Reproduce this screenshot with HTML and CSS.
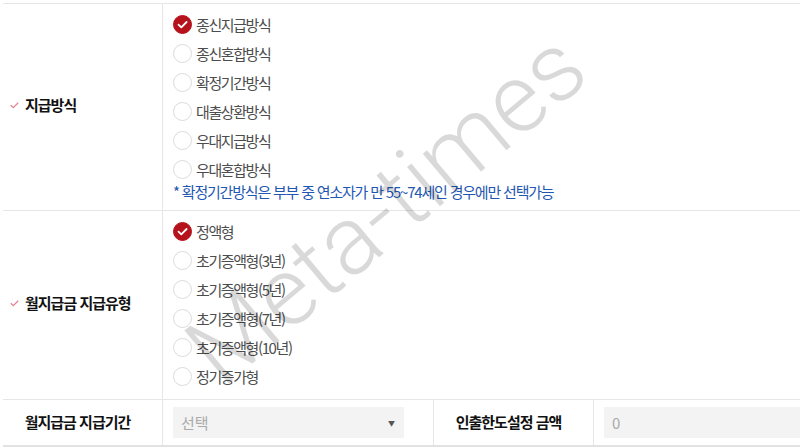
FILE: index.html
```html
<!DOCTYPE html>
<html lang="ko">
<head>
<meta charset="utf-8">
<link rel="stylesheet" href="styles.css">
</head>
<body>
<div class="page">
  <div class="row r1">
    <div class="th"><svg class="tick" width="9" height="7" viewBox="0 0 9 7"><path d="M0.8 3.2 L3.3 5.7 L8.2 0.8" fill="none" stroke="#e38592" stroke-width="1.3"/></svg>지급방식</div>
    <div class="td">
      <ul class="radios">
        <li class="radio on"><span class="dot"><svg width="19" height="19" viewBox="0 0 19 19"><path d="M5.5 9.6 L8.3 12.3 L13.6 7" fill="none" stroke="#fff" stroke-width="1.8" stroke-linecap="round" stroke-linejoin="round"/></svg></span>종신지급방식</li>
        <li class="radio"><span class="dot"></span>종신혼합방식</li>
        <li class="radio"><span class="dot"></span>확정기간방식</li>
        <li class="radio"><span class="dot"></span>대출상환방식</li>
        <li class="radio"><span class="dot"></span>우대지급방식</li>
        <li class="radio"><span class="dot"></span>우대혼합방식</li>
      </ul>
      <p class="note">* 확정기간방식은 부부 중 연소자가 만 55~74세인 경우에만 선택가능</p>
    </div>
  </div>
  <div class="row r2">
    <div class="th"><svg class="tick" width="9" height="7" viewBox="0 0 9 7"><path d="M0.8 3.2 L3.3 5.7 L8.2 0.8" fill="none" stroke="#e38592" stroke-width="1.3"/></svg>월지급금 지급유형</div>
    <div class="td">
      <ul class="radios">
        <li class="radio on"><span class="dot"><svg width="19" height="19" viewBox="0 0 19 19"><path d="M5.5 9.6 L8.3 12.3 L13.6 7" fill="none" stroke="#fff" stroke-width="1.8" stroke-linecap="round" stroke-linejoin="round"/></svg></span>정액형</li>
        <li class="radio"><span class="dot"></span>초기증액형(3년)</li>
        <li class="radio"><span class="dot"></span>초기증액형(5년)</li>
        <li class="radio"><span class="dot"></span>초기증액형(7년)</li>
        <li class="radio"><span class="dot"></span>초기증액형(10년)</li>
        <li class="radio"><span class="dot"></span>정기증가형</li>
      </ul>
    </div>
  </div>
  <div class="row r3">
    <div class="th center">월지급금 지급기간</div>
    <div class="td cell-sel">
      <div class="select"><span>선택</span><span class="arrow">▼</span></div>
    </div>
    <div class="th center th2">인출한도설정 금액</div>
    <div class="td cell-in">
      <div class="input">0</div>
    </div>
  </div>
  <div class="wm">Meta-times</div>
</div>
</body>
</html>
```
FILE: styles.css
```css
* { box-sizing: border-box; }
html, body { margin: 0; padding: 0; background: #fff; }
body {
  width: 800px;
  height: 448px;
  overflow: hidden;
  font-family: "Noto Sans CJK KR", "Noto Sans", sans-serif;
  font-size: 15px;
  color: #4d4d4d;
}
.page {
  position: relative;
  margin: 3px 0 0 3px;
  border-top: 1px solid #e6e6e6;
}
.row {
  display: flex;
  border-bottom: 1px solid #e6e6e6;
}
.r3 { border-bottom: 2px solid #e2e2e2; }
.th {
  width: 160px;
  flex: none;
  border-right: 1px solid #e6e6e6;
  display: flex;
  align-items: center;
  padding: 0 0 5px 7px;
  font-weight: 700;
  color: #111;
  letter-spacing: -1px;
}
.tick { margin-right: 6px; margin-top: 2px; flex: none; }
.th.center { justify-content: center; padding: 0 10px 2px 0; }
.th2 { width: 160px; }
.td {
  flex: 1;
  padding: 6px 0 10px 10px;
}
.r2 .td { padding-bottom: 8px; }
.radios { list-style: none; margin: 0; padding: 0; }
.radio {
  height: 29px;
  display: flex;
  align-items: center;
  letter-spacing: -1.4px;
}
.dot {
  width: 19px;
  height: 19px;
  border-radius: 50%;
  border: 1px solid #dcdcdc;
  background: #fff;
  margin-right: 4px;
  flex: none;
  display: flex;
}
.radio.on .dot { background: #b5121b; border-color: #b5121b; }
.radio.on .dot svg { margin: -1px; }
.note {
  margin: 0;
  line-height: 16px;
  color: #1f57b3;
  letter-spacing: -1.2px;
}
.cell-sel { flex: none; width: 271px; border-right: 1px solid #e6e6e6; padding: 7px 0 7px 10px; }
.cell-in { padding: 7px 0 7px 10px; }
.select, .input {
  height: 31px;
  background: #f3f3f3;
  display: flex;
  align-items: center;
  padding: 0 8px;
  color: #aaa;
}
.select { width: 231px; justify-content: space-between; }
.arrow { font-size: 7px; color: #555; margin-right: 1px; }
.wm {
  position: absolute;
  left: 219px;
  top: 385px;
  transform-origin: 0 0;
  transform: rotate(-40deg) translateY(-81px);
  font-family: Roboto, "Noto Sans", sans-serif;
  font-weight: 300;
  font-size: 97px;
  line-height: 1;
  color: rgba(0, 0, 0, 0.15);
  white-space: nowrap;
  pointer-events: none;
}
```
